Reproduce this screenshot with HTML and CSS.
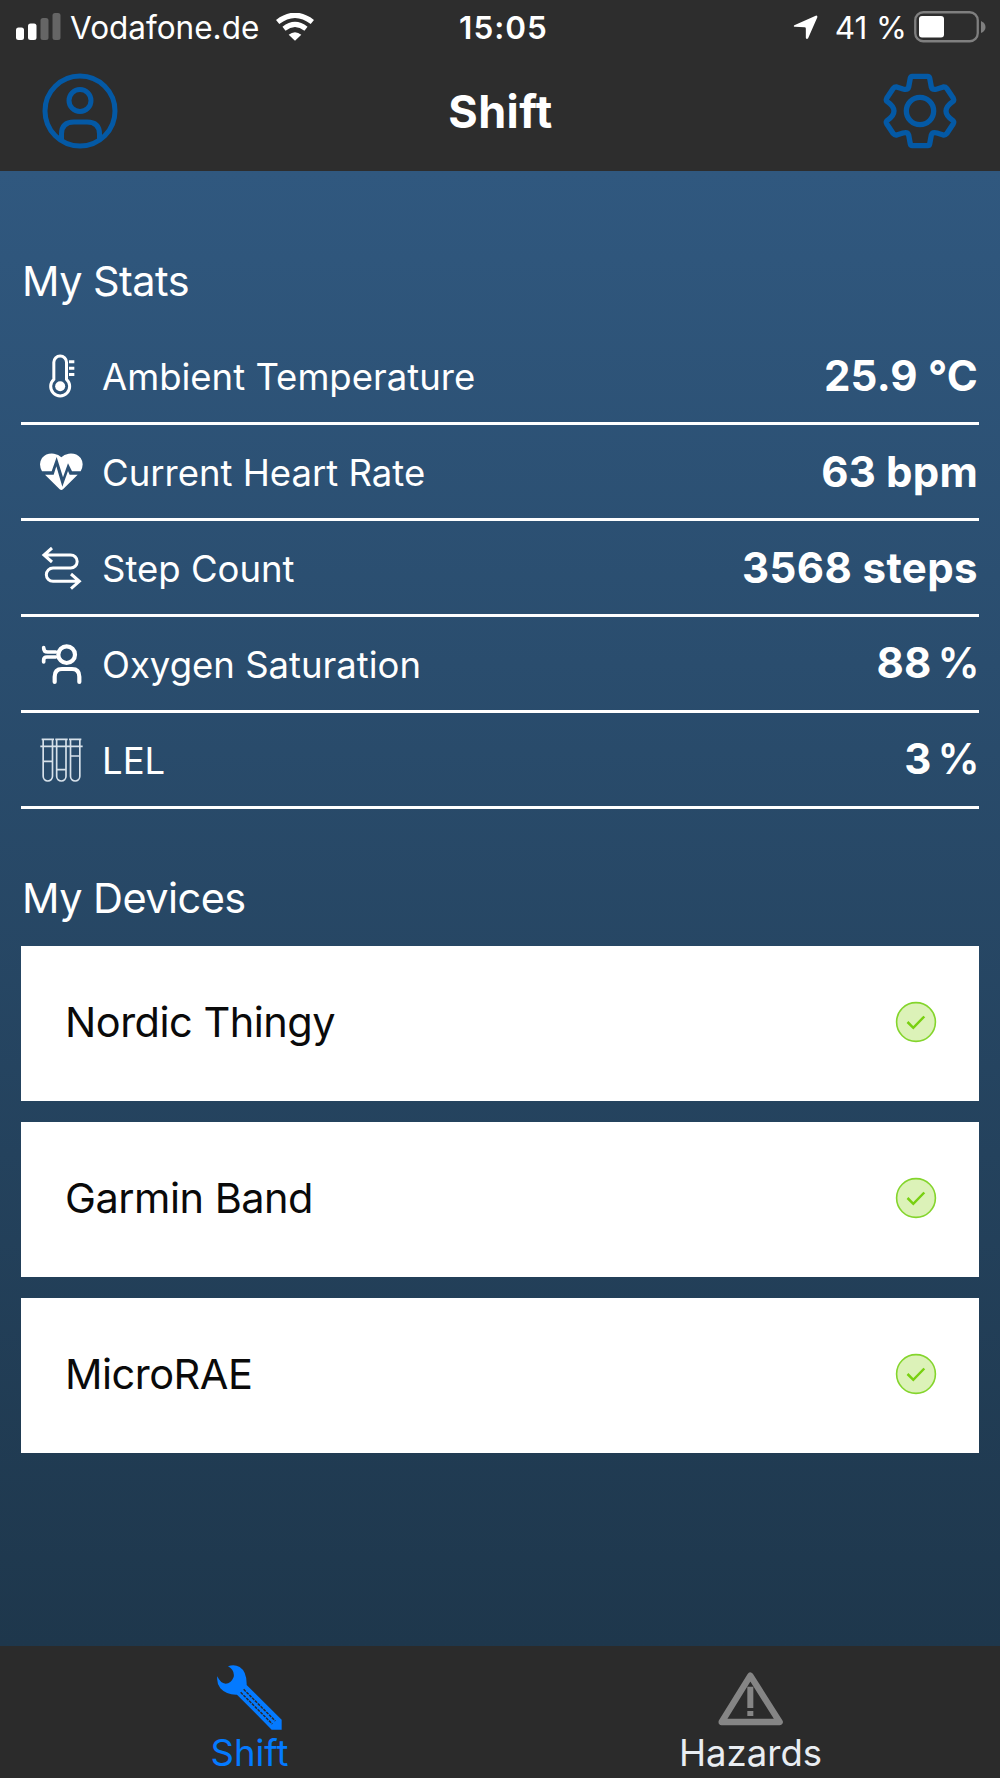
FILE: index.html
```
<!DOCTYPE html>
<html lang="en">
<head>
    <meta charset="UTF-8">
    <meta name="viewport" content="width=device-width, initial-scale=1.0">
    <title>Shift</title>
    <link rel="stylesheet" href="styles.css">
</head>
<body>
    <div class="app">
        <header class="top">
            <div class="status-bar">
                <div class="status-left">
                    <svg class="signal" viewBox="0 0 45 28">
                        <rect x="0" y="14.5" width="8" height="12.5" rx="2.5" fill="#fff"/>
                        <rect x="12" y="10.5" width="8.5" height="16.5" rx="2.5" fill="#fff"/>
                        <rect x="24.5" y="5" width="8" height="22" rx="2.5" fill="#656565"/>
                        <rect x="36.5" y="0" width="8" height="27" rx="2.5" fill="#656565"/>
                    </svg>
                    <span class="carrier">Vodafone.de</span>
                    <svg class="wifi" viewBox="0 0 114 84">
                        <path d="M5 27 Q57 -13 109 27" fill="none" stroke="#fff" stroke-width="16"/>
                        <path d="M24 47 Q57 21 90 47" fill="none" stroke="#fff" stroke-width="15"/>
                        <path d="M38 65 Q57 50 76 65 L57 83 Z" fill="#fff"/>
                    </svg>
                </div>
                <span class="time">15:05</span>
                <div class="status-right">
                    <svg class="location" viewBox="0 0 76 76">
                        <path d="M4 31 L69 2 Q75 0 74 7 L46 71 Q41 76 39 69 V41 Q39 37 35 37 L6 36 Q0 35 4 31 Z" fill="#fff"/>
                    </svg>
                    <span class="percent">41 %</span>
                    <svg class="battery" viewBox="0 0 73 32">
                        <rect x="1.25" y="1.25" width="62.5" height="29" rx="8" fill="none" stroke="#7f7f7f" stroke-width="2.3"/>
                        <rect x="5" y="5" width="25" height="21.5" rx="3" fill="#fff"/>
                        <path d="M67 10 Q71.5 12 71.5 16 Q71.5 20 67 22 Z" fill="#7f7f7f"/>
                    </svg>
                </div>
            </div>
            <div class="nav-bar">
                <svg class="nav-icon" viewBox="0 0 76 76">
                    <g fill="none" stroke="#0459a5" stroke-width="5">
                        <circle cx="38" cy="38" r="35"/>
                        <circle cx="38" cy="27.5" r="11"/>
                        <path d="M19.5 67 V61 Q19.5 49 32 49 H45 Q57.5 49 57.5 61 V67"/>
                    </g>
                </svg>
                <h1>Shift</h1>
                <svg class="nav-icon" viewBox="0 0 226 228">
                    <g fill="none" stroke="#0459a5" stroke-width="16" stroke-linejoin="round">
                        <path d="M90 10 H136 Q141 10 142 15 L147 42 Q150 52 164 48 L183 42 Q189 41 193 46 L213 76 Q216 82 211 86 Q191 100 191 114 Q191 128 211 142 Q216 146 213 152 L193 182 Q189 187 183 186 L164 180 Q150 176 147 186 L142 213 Q141 218 136 218 H90 Q85 218 84 213 L79 186 Q76 176 62 180 L43 186 Q37 187 33 182 L13 152 Q10 146 15 142 Q35 128 35 114 Q35 100 15 86 Q10 82 13 76 L33 46 Q37 41 43 42 L62 48 Q76 52 79 42 L84 15 Q85 10 90 10 Z"/>
                        <circle cx="113" cy="114" r="41"/>
                    </g>
                </svg>
            </div>
        </header>

        <main class="content">
            <h2>My Stats</h2>
            <ul class="stats">
                <li>
                    <svg class="stat-icon" viewBox="0 0 132 132">
                        <path d="M44.5 76 V25 A19 19 0 0 1 82.5 25 V76 A28.5 28.5 0 1 1 44.5 76 Z" fill="none" stroke="#fff" stroke-width="9"/>
                        <circle cx="63.5" cy="97" r="15" fill="#fff"/>
                        <path d="M90 23.5 H106 M90 42.5 H106 M90 61.5 H106" stroke="#fff" stroke-width="9"/>
                    </svg>
                    <span class="label">Ambient Temperature</span>
                    <span class="value">25.9 °C</span>
                </li>
                <li>
                    <svg class="stat-icon" viewBox="0 0 132 132">
                        <path d="M9 64 Q-3 42 9 24 Q23 8 45 11 Q59 13 67 22 Q75 13 89 11 Q111 8 125 24 Q137 42 125 64 H99 L87 40 L72 82 L53 21 L38 64 Z" fill="#fff"/>
                        <path d="M18 74 H44 L52 49 L70 110 L87 63 L92 74 H116 L72 118 Q67 122 62 118 Z" fill="#fff"/>
                    </svg>
                    <span class="label">Current Heart Rate</span>
                    <span class="value">63 bpm</span>
                </li>
                <li>
                    <svg class="stat-icon" viewBox="0 0 132 132">
                        <path d="M39 6 L15 27 L39 48 M15 27 H95 A19.5 19.5 0 0 1 95 66 H42 A20 20 0 0 0 42 106 H121 M96 84 L121 106 L96 128" fill="none" stroke="#fff" stroke-width="9"/>
                    </svg>
                    <span class="label">Step Count</span>
                    <span class="value steps">3568 steps</span>
                </li>
                <li>
                    <svg class="stat-icon" viewBox="0 0 132 132">
                        <g fill="none" stroke="#fff" stroke-width="12.5" stroke-linecap="round">
                            <circle cx="83" cy="38" r="25"/>
                            <path d="M47 120 V104 Q47 81 69 81 H99 Q121 81 121 104 V120"/>
                            <path d="M14 17 Q14 30 26 30 H50 M14 60 V54 Q14 45 24 45 H50" stroke-width="11"/>
                        </g>
                    </svg>
                    <span class="label">Oxygen Saturation</span>
                    <span class="value percentage">88 <span class="unit">%</span></span>
                </li>
                <li>
                    <svg class="stat-icon" viewBox="0 0 132 132">
                        <g fill="none" stroke="#d7e1ea" stroke-width="5">
                            <path d="M12.5 4 V115 A14 14 0 0 0 40.5 115 V4 M53 4 V115 A14 14 0 0 0 81 115 V4 M94.5 4 V115 A14 14 0 0 0 122.5 115 V4"/>
                            <path d="M8 4 H45 M49 4 H86 M90 4 H127 M4 25 H131"/>
                            <path d="M12 70 H41 M53 95 H81 M94 54 H123"/>
                        </g>
                    </svg>
                    <span class="label">LEL</span>
                    <span class="value percentage">3 <span class="unit">%</span></span>
                </li>
            </ul>

            <h2>My Devices</h2>
            <div class="devices">
                <div class="device">
                    <span class="name">Nordic Thingy</span>
                    <svg class="check" viewBox="0 0 42 42">
                        <circle cx="21" cy="21" r="19.4" fill="#dcf2b8" stroke="#84d52c" stroke-width="1.6"/>
                        <path d="M12.5 21 L18.3 26.8 L29.3 15.5" fill="none" stroke="#78d010" stroke-width="2.5"/>
                    </svg>
                </div>
                <div class="device">
                    <span class="name">Garmin Band</span>
                    <svg class="check" viewBox="0 0 42 42">
                        <circle cx="21" cy="21" r="19.4" fill="#dcf2b8" stroke="#84d52c" stroke-width="1.6"/>
                        <path d="M12.5 21 L18.3 26.8 L29.3 15.5" fill="none" stroke="#78d010" stroke-width="2.5"/>
                    </svg>
                </div>
                <div class="device">
                    <span class="name">MicroRAE</span>
                    <svg class="check" viewBox="0 0 42 42">
                        <circle cx="21" cy="21" r="19.4" fill="#dcf2b8" stroke="#84d52c" stroke-width="1.6"/>
                        <path d="M12.5 21 L18.3 26.8 L29.3 15.5" fill="none" stroke="#78d010" stroke-width="2.5"/>
                    </svg>
                </div>
            </div>
        </main>

        <nav class="tabs">
            <a class="tab active">
                <svg class="tab-icon" viewBox="0 0 195 195">
                    <path d="M33 4 Q52 -3 68 6 Q90 20 89 60 L194 164 V194 H164 L60 89 Q28 90 10 70 Q-2 54 1 34 Q10 55 26 56 Q42 56 50 36 Q54 16 33 4 Z" fill="#047aff"/>
                    <path d="M80 73 L175 168 M71 82 L166 177" stroke="#2b2b2b" stroke-width="4.5" stroke-dasharray="9 3"/>
                </svg>
                <span>Shift</span>
            </a>
            <a class="tab">
                <svg class="tab-icon" viewBox="0 0 195 195">
                    <path d="M97 32 L185 171 H11 Z" fill="none" stroke="#858585" stroke-width="19" stroke-linejoin="round"/>
                    <path d="M97 65 V129 M97 138 V153" stroke="#858585" stroke-width="18"/>
                </svg>
                <span>Hazards</span>
            </a>
        </nav>
    </div>
</body>
</html>
```
FILE: styles.css
```
* {
    box-sizing: border-box;
    margin: 0;
    padding: 0;
}
body {
    font-family: Inter, "Liberation Sans", sans-serif;
    color: #fff;
    background: #2b2b2b;
}
.app {
    display: flex;
    flex-direction: column;
    height: 1778px;
    overflow: hidden;
    white-space: nowrap;
}
svg {
    display: block;
    flex: none;
}

/* top */
.top {
    height: 171px;
    background: #2d2d2d;
}
.status-bar {
    display: grid;
    grid-template-columns: 1fr auto 1fr;
    align-items: center;
    height: 54px;
    padding: 0 13px 0 16px;
    font-size: 31.5px;
}
.status-left, .status-right {
    display: flex;
    align-items: center;
}
.status-right {
    justify-content: flex-end;
}
.signal {
    width: 45px;
    height: 28px;
    margin-right: 9px;
}
.wifi {
    width: 38px;
    height: 28px;
    margin-left: 17px;
}
.time {
    margin-left: 4px;
    font-weight: 600;
    letter-spacing: 1px;
}
.location {
    width: 25px;
    height: 25px;
    margin-right: 17px;
}
.battery {
    width: 73px;
    height: 32px;
    margin-left: 7px;
}
.nav-bar {
    display: flex;
    justify-content: space-between;
    align-items: center;
    height: 113px;
    padding: 0 42px;
}
.nav-icon {
    width: 76px;
    height: 76px;
}
h1 {
    font-size: 45px;
    font-weight: 700;
    line-height: 54px;
    letter-spacing: 0.4px;
    padding: 2px 0 0 1px;
}

/* content */
.content {
    flex: 1;
    padding: 85px 21px 0;
    background: linear-gradient(#30587f, #1e374c);
}
h2 {
    font-size: 41.5px;
    font-weight: 400;
    line-height: 51px;
    letter-spacing: -0.55px;
    padding-left: 1px;
}
.stats {
    list-style: none;
    margin: 22px 0 64px;
}
.stats li {
    display: flex;
    align-items: center;
    height: 96px;
    padding: 0 1px 0 18px;
    border-bottom: 3px solid #fff;
}
.stat-icon {
    width: 44px;
    height: 44px;
    margin-right: 19px;
}
.label {
    flex: 1;
    padding-top: 2px;
    font-size: 36.5px;
}
.value {
    font-size: 42px;
    font-weight: 700;
    letter-spacing: 0.2px;
}
.value.steps {
    letter-spacing: 0.4px;
}
.value.percentage {
    padding-bottom: 2px;
    margin-right: -2px;
    word-spacing: -4px;
}
.unit {
    font-weight: 600;
}
.devices {
    display: flex;
    flex-direction: column;
    gap: 21px;
    margin-top: 22px;
}
.device {
    display: flex;
    justify-content: space-between;
    align-items: center;
    height: 155px;
    padding: 0 42px 3px 44px;
    background: #fff;
    color: #0a0a0a;
    font-size: 41.5px;
    letter-spacing: -0.5px;
}
.check {
    width: 42px;
    height: 42px;
}

/* tabs */
.tabs {
    display: flex;
    height: 132px;
    background: #2b2b2b;
}
.tab {
    flex: 1;
    display: flex;
    flex-direction: column;
    align-items: center;
    padding-top: 19px;
    font-size: 36.5px;
    line-height: 46px;
    color: #e9edf2;
}
.tab.active {
    padding-right: 2px;
    color: #047aff;
}
.tab-icon {
    width: 65px;
    height: 65px;
}
```
